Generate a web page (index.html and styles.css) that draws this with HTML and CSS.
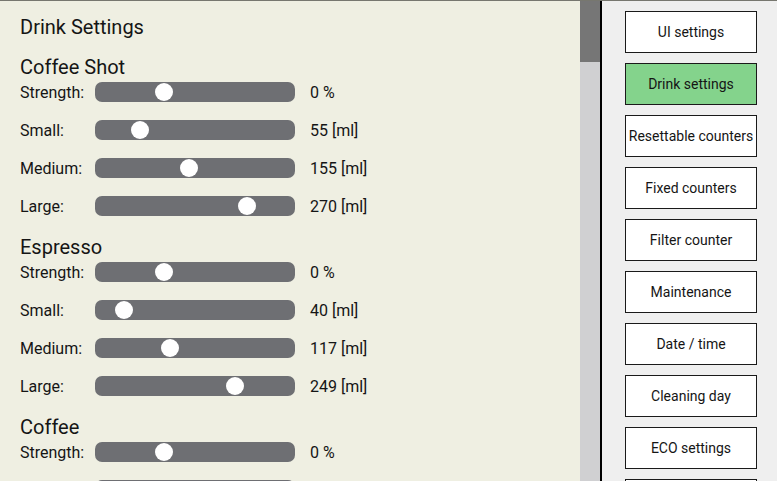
FILE: index.html
```html
<!DOCTYPE html>
<html lang="en">
<head>
    <meta charset="UTF-8">
    <meta name="viewport" content="width=device-width, initial-scale=1.0">
    <title>Drink Settings</title>
    <link rel="stylesheet" href="styles.css">
</head>
<body>
    <div class="screen">
        <div class="content">
            <h1>Drink Settings</h1>

            <div class="drink">
                <h2>Coffee Shot</h2>
                <div class="row"><span class="label">Strength:</span><div class="track"><span class="thumb" style="left: 60px"></span></div><span class="value">0 %</span></div>
                <div class="row"><span class="label">Small:</span><div class="track"><span class="thumb" style="left: 36px"></span></div><span class="value">55 [ml]</span></div>
                <div class="row"><span class="label">Medium:</span><div class="track"><span class="thumb" style="left: 85px"></span></div><span class="value">155 [ml]</span></div>
                <div class="row"><span class="label">Large:</span><div class="track"><span class="thumb" style="left: 143px"></span></div><span class="value">270 [ml]</span></div>
            </div>

            <div class="drink">
                <h2>Espresso</h2>
                <div class="row"><span class="label">Strength:</span><div class="track"><span class="thumb" style="left: 60px"></span></div><span class="value">0 %</span></div>
                <div class="row"><span class="label">Small:</span><div class="track"><span class="thumb" style="left: 20px"></span></div><span class="value">40 [ml]</span></div>
                <div class="row"><span class="label">Medium:</span><div class="track"><span class="thumb" style="left: 66px"></span></div><span class="value">117 [ml]</span></div>
                <div class="row"><span class="label">Large:</span><div class="track"><span class="thumb" style="left: 131px"></span></div><span class="value">249 [ml]</span></div>
            </div>

            <div class="drink">
                <h2>Coffee</h2>
                <div class="row"><span class="label">Strength:</span><div class="track"><span class="thumb" style="left: 60px"></span></div><span class="value">0 %</span></div>
                <div class="row"><span class="label"></span><div class="track"><span class="thumb" style="left: 0px"></span></div></div>
            </div>
        </div>

        <div class="scrollbar">
            <div class="scroll-thumb"></div>
        </div>

        <div class="nav">
            <button type="button">UI settings</button>
            <button type="button" class="active">Drink settings</button>
            <button type="button">Resettable counters</button>
            <button type="button">Fixed counters</button>
            <button type="button">Filter counter</button>
            <button type="button">Maintenance</button>
            <button type="button">Date / time</button>
            <button type="button">Cleaning day</button>
            <button type="button">ECO settings</button>
            <button type="button"></button>
        </div>
    </div>
</body>
</html>
```

FILE: styles.css
```css
html, body {
    margin: 0;
    height: 100%;
    overflow: hidden;
}
body {
    font-family: Roboto, "Liberation Sans", sans-serif;
    color: #151515;
    background: #efefef;
}
.screen {
    display: flex;
    height: 481px;
    border-top: 1px solid #77776f;
    box-sizing: border-box;
}
.content {
    width: 580px;
    flex-shrink: 0;
    background: #efefe2;
    padding: 14px 0 0 20px;
    box-sizing: border-box;
    overflow: hidden;
    display: flex;
    flex-direction: column;
    gap: 19px;
}
h1 {
    margin: 0 0 -3px;
    font-size: 20px;
    font-weight: 400;
    line-height: 24px;
}
.drink {
    display: flex;
    flex-direction: column;
    gap: 18px;
}
h2 {
    margin: 0 0 -15px;
    font-size: 20px;
    font-weight: 400;
    line-height: 24px;
}
.row {
    display: flex;
    align-items: center;
    height: 20px;
    font-size: 16px;
}
.label {
    width: 75px;
}
.track {
    position: relative;
    width: 200px;
    height: 20px;
    border-radius: 7px;
    background: #6e6f73;
}
.thumb {
    position: absolute;
    top: 1px;
    width: 18px;
    height: 18px;
    border-radius: 50%;
    background: #fff;
}
.value {
    margin-left: 15px;
}
.scrollbar {
    width: 20px;
    flex-shrink: 0;
    background: #d0d0d2;
    border-right: 2px solid #000;
}
.scroll-thumb {
    height: 61px;
    background: #767676;
}
.nav {
    flex: 1;
    display: flex;
    flex-direction: column;
    gap: 10px;
    padding: 10px 0 0 23px;
    overflow: hidden;
}
.nav button {
    flex-shrink: 0;
    width: 132px;
    height: 42px;
    padding: 0;
    background: #fff;
    border: 1px solid #1a1a1a;
    border-radius: 0;
    font-family: inherit;
    font-size: 14px;
    color: #151515;
}
.nav button.active {
    background: #84d38c;
}
```
